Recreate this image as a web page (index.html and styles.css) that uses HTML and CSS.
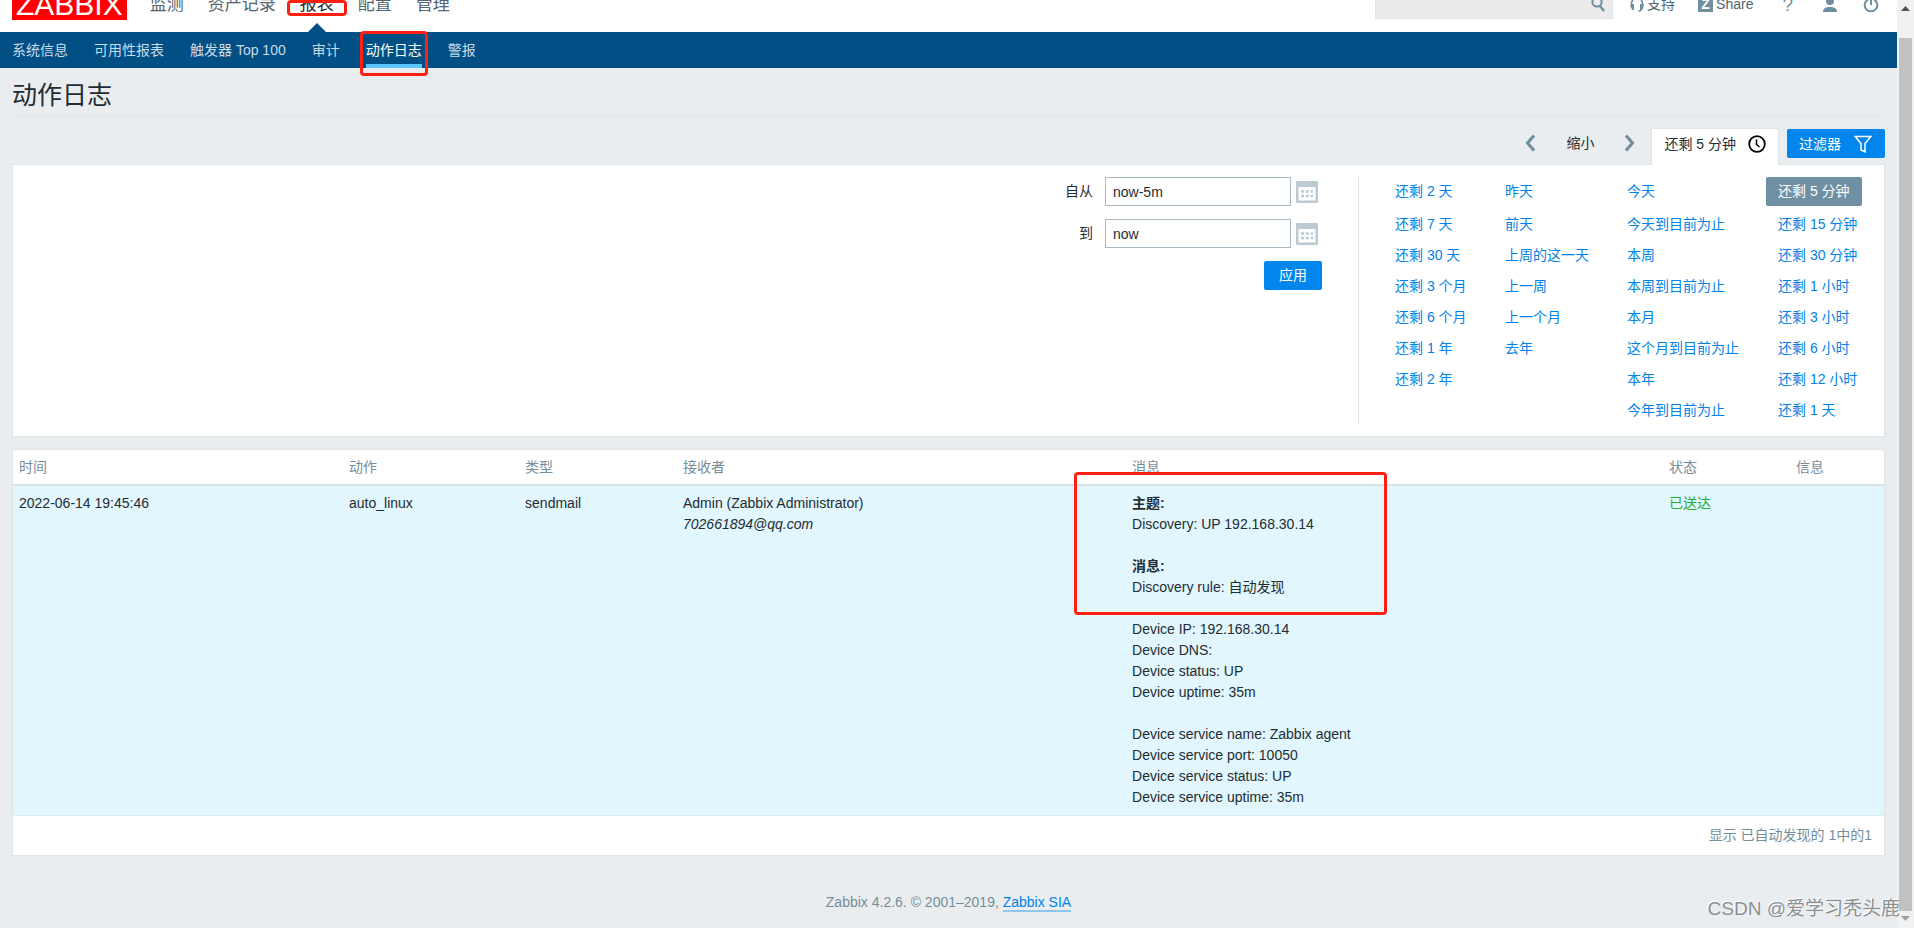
FILE: index.html
```html
<!DOCTYPE html>
<html lang="zh-CN">
<head>
<meta charset="utf-8">
<title>动作日志</title>
<link rel="stylesheet" href="styles.css">
</head>
<body>
<div class="page">
  <header class="top">
    <a class="logo" href="#">ZABBIX</a>
    <nav class="menu">
      <a href="#">监测</a>
      <a href="#">资产记录</a>
      <a href="#" class="current"><span class="mark mark-menu"></span>报表</a>
      <a href="#">配置</a>
      <a href="#">管理</a>
    </nav>
    <div class="tools">
      <div class="search">
        <input type="text" aria-label="搜索">
        <button type="button" aria-label="搜索"><svg width="14" height="16" viewBox="0 0 14 16" fill="none" stroke="#6f8fa1" stroke-width="2"><circle cx="6" cy="6" r="4.6"/><path d="M9 10l4 5" stroke-width="2.4"/></svg></button>
      </div>
      <a class="support" href="#"><svg width="14" height="16" viewBox="0 0 14 16"><path d="M1.5 9V6.500a5.500 5.500 0 0 1 11 0V9c0 3-1 4.500-4 5.500" fill="none" stroke="#6f8fa1" stroke-width="1.600"/><path d="M.5 7H4v6H2.500L.5 10zM13.500 7H10v6h1.500l2-3z" fill="#6f8fa1"/></svg>支持</a>
      <a class="share" href="#"><span class="zicon">Z</span>Share</a>
      <a class="help" href="#">?</a>
      <a class="ico" href="#" aria-label="用户"><svg width="16" height="17" viewBox="0 0 16 17" fill="#6f8fa1"><circle cx="8" cy="5" r="4"/><path d="M1 16c0-4 3-5 7-5s7 1 7 5z"/></svg></a>
      <a class="ico" href="#" aria-label="退出"><svg width="16" height="17" viewBox="0 0 16 17" fill="none" stroke="#6f8fa1" stroke-width="2"><path d="M5 3.500a6.300 6.300 0 1 0 6 0M8 1v8"/></svg></a>
    </div>
  </header>
  <nav class="submenu">
    <a href="#">系统信息</a>
    <a href="#">可用性报表</a>
    <a href="#">触发器 Top 100</a>
    <a href="#">审计</a>
    <a href="#" class="selected">动作日志<span class="mark mark-sub"></span></a>
    <a href="#">警报</a>
  </nav>
  <main>
    <h1>动作日志</h1>
    <div class="tabs">
      <button type="button" class="arrow" aria-label="上一页"><svg width="10" height="18" viewBox="0 0 10 18" fill="none" stroke="#6f8fa1" stroke-width="3"><path d="M9 1.500L2.500 9L9 16.500"/></svg></button>
      <button type="button" class="zoomout">缩小</button>
      <button type="button" class="arrow" aria-label="下一页"><svg width="10" height="18" viewBox="0 0 10 18" fill="none" stroke="#6f8fa1" stroke-width="3"><path d="M1 1.500L7.500 9L1 16.500"/></svg></button>
      <a class="timetab" href="#">还剩 5 分钟<svg width="18" height="18" viewBox="0 0 18 18" fill="none" stroke="#000"><circle cx="9" cy="9" r="7.800" stroke-width="1.800"/><path d="M8.500 4.500V9.500L11.500 12" stroke-width="1.500"/></svg></a>
      <a class="filtertab" href="#">过滤器<svg width="18" height="18" viewBox="0 0 18 18" fill="none" stroke="#fff" stroke-width="1.500"><path d="M1.200 1.500H16.800L11 8.500V16.800L7 15V8.500z"/></svg></a>
    </div>
    <section class="filter">
      <form class="range">
        <label for="from">自从</label>
        <input id="from" type="text" value="now-5m">
        <button type="button" class="cal" aria-label="日历"><svg width="22" height="22" viewBox="0 0 22 22"><path d="M0 1q0-1 1-1h20q1 0 1 1v20q0 1-1 1H1q-1 0-1-1zM2.500 6v13.500h17V6z" fill="#bccad4" fill-rule="evenodd"/><path d="M5 10.500h12M5 15h12" stroke="#bccad4" stroke-width="2.500" stroke-dasharray="3 1.800"/></svg></button>
        <label for="to">到</label>
        <input id="to" type="text" value="now">
        <button type="button" class="cal" aria-label="日历"><svg width="22" height="22" viewBox="0 0 22 22"><path d="M0 1q0-1 1-1h20q1 0 1 1v20q0 1-1 1H1q-1 0-1-1zM2.500 6v13.500h17V6z" fill="#bccad4" fill-rule="evenodd"/><path d="M5 10.500h12M5 15h12" stroke="#bccad4" stroke-width="2.500" stroke-dasharray="3 1.800"/></svg></button>
        <button type="button" class="apply">应用</button>
      </form>
      <div class="quick">
        <ul>
          <li><a href="#">还剩 2 天</a></li><li><a href="#">还剩 7 天</a></li><li><a href="#">还剩 30 天</a></li><li><a href="#">还剩 3 个月</a></li><li><a href="#">还剩 6 个月</a></li><li><a href="#">还剩 1 年</a></li><li><a href="#">还剩 2 年</a></li>
        </ul>
        <ul>
          <li><a href="#">昨天</a></li><li><a href="#">前天</a></li><li><a href="#">上周的这一天</a></li><li><a href="#">上一周</a></li><li><a href="#">上一个月</a></li><li><a href="#">去年</a></li>
        </ul>
        <ul>
          <li><a href="#">今天</a></li><li><a href="#">今天到目前为止</a></li><li><a href="#">本周</a></li><li><a href="#">本周到目前为止</a></li><li><a href="#">本月</a></li><li><a href="#">这个月到目前为止</a></li><li><a href="#">本年</a></li><li><a href="#">今年到目前为止</a></li>
        </ul>
        <ul>
          <li><a href="#" class="picked">还剩 5 分钟</a></li><li><a href="#">还剩 15 分钟</a></li><li><a href="#">还剩 30 分钟</a></li><li><a href="#">还剩 1 小时</a></li><li><a href="#">还剩 3 小时</a></li><li><a href="#">还剩 6 小时</a></li><li><a href="#">还剩 12 小时</a></li><li><a href="#">还剩 1 天</a></li>
        </ul>
      </div>
    </section>
    <table class="log">
      <colgroup><col class="c-time"><col class="c-action"><col class="c-type"><col class="c-to"><col class="c-msg"><col class="c-status"><col></colgroup>
      <thead>
        <tr><th>时间</th><th>动作</th><th>类型</th><th>接收者</th><th>消息</th><th>状态</th><th>信息</th></tr>
      </thead>
      <tbody>
        <tr>
          <td>2022-06-14 19:45:46</td>
          <td>auto_linux</td>
          <td>sendmail</td>
          <td>Admin (Zabbix Administrator)<br><em>702661894@qq.com</em></td>
          <td><div class="message"><span class="mark mark-msg"></span><b>主题:</b><br>Discovery: UP 192.168.30.14<br><br><b>消息:</b><br>Discovery rule: 自动发现<br><br>Device IP: 192.168.30.14<br>Device DNS:<br>Device status: UP<br>Device uptime: 35m<br><br>Device service name: Zabbix agent<br>Device service port: 10050<br>Device service status: UP<br>Device service uptime: 35m</div></td>
          <td class="sent">已送达</td>
          <td></td>
        </tr>
      </tbody>
      <tfoot>
        <tr><td colspan="7">显示 已自动发现的 1中的1</td></tr>
      </tfoot>
    </table>
  </main>
  <footer>Zabbix 4.2.6. © 2001–2019, <a href="#">Zabbix SIA</a></footer>
</div>
<div class="scrollbar">
  <svg width="9" height="5" viewBox="0 0 9 5"><path d="M0 5L4.500 0L9 5z" fill="#505050"/></svg>
  <div class="thumb"></div>
  <svg width="9" height="5" viewBox="0 0 9 5"><path d="M0 0L4.500 5L9 0z" fill="#a0a0a0"/></svg>
</div>
<div class="watermark">CSDN @爱学习秃头鹿</div>
</body>
</html>
```
FILE: styles.css
```css
* {
  box-sizing: border-box;
}

body {
  margin: 0;
  display: flex;
  position: relative;
  min-height: 100vh;
  background: #e9edf0;
  color: #1f2c33;
  font: 14px/21px "Liberation Sans", "Noto Sans CJK SC", sans-serif;
}

a {
  color: #0082e6;
  text-decoration: none;
}

button,
input {
  font: inherit;
  color: inherit;
  border: 0;
  padding: 0;
  background: none;
}

svg {
  display: block;
  flex: none;
}

.page {
  flex: 1;
  min-width: 0;
}

/* red highlight frames */
.mark {
  position: absolute;
  border: 3px solid #ff2012;
  border-radius: 4px;
}

/* header */
.top {
  display: flex;
  align-items: flex-end;
  height: 32px;
  padding: 0 12px;
  background: #fff;
  overflow: hidden;
}

.logo {
  margin: 0 23px 12px 0;
  padding: 0 4px;
  background: #f00;
  color: #fff;
  font-size: 30px;
  line-height: 30px;
}

.menu {
  display: flex;
  gap: 24px;
  height: 40px;
  font-size: 17px;
  line-height: 26px;
}

.menu a {
  position: relative;
  color: #52646f;
}

.menu .current {
  color: #1f2c33;
}

.menu .current::after {
  content: "";
  position: absolute;
  bottom: 0;
  left: 50%;
  margin-left: -9px;
  border: 9px solid transparent;
  border-top: 0;
  border-bottom-color: #024f85;
}

.mark-menu {
  inset: 8px -13px 16px;
}

.tools {
  display: flex;
  align-items: flex-end;
  margin: 0 6px 13px auto;
  color: #52646f;
}

.tools a {
  display: flex;
  align-items: center;
  gap: 3px;
  height: 17px;
  margin-bottom: 6px;
  color: #52646f;
}

.search {
  display: flex;
  align-items: center;
  margin-right: 17px;
  width: 238px;
  height: 31px;
  border: 1px solid #dfe4e7;
  background: #ebebeb;
}

.search input {
  flex: 1;
  min-width: 0;
}

.search button {
  padding: 0 7px 0 0;
}

.tools .support {
  margin-right: 23px;
}

.tools .share {
  margin-right: 29px;
}

.zicon {
  width: 15px;
  background: #6f8fa1;
  color: #fff;
  font-weight: bold;
  font-size: 14px;
  line-height: 15px;
  text-align: center;
}

.tools .help {
  margin-right: 29px;
  color: #6f8fa1;
  font-size: 19px;
}

.ico + .ico {
  margin-left: 25px;
}

/* second level menu */
.submenu {
  display: flex;
  gap: 26px;
  height: 36px;
  padding: 0 12px;
  background: #024f85;
  line-height: 36px;
}

.submenu a {
  position: relative;
  color: #c8dbe8;
}

.submenu .selected {
  color: #fff;
  box-shadow: inset 0 -4px #5cc6ff;
}

.mark-sub {
  inset: -1px -6px -8px;
}

main {
  padding: 0 12px;
}

h1 {
  margin: 0 0 11px;
  padding: 11px 0 4px;
  border-bottom: 1px solid #dfe4e7;
  font-size: 25px;
  font-weight: normal;
  line-height: 33px;
}

/* time selector */
.tabs {
  display: flex;
  justify-content: flex-end;
  align-items: flex-start;
  line-height: 30px;
}

.arrow {
  padding: 6px 0;
}

.zoomout {
  margin: 0 31px;
}

.timetab {
  display: flex;
  align-items: center;
  gap: 12px;
  position: relative;
  height: 37px;
  margin: 0 8px -1px 16px;
  padding: 0 12px 6px;
  border: 1px solid #dfe4e7;
  border-bottom: 0;
  border-radius: 2px 2px 0 0;
  background: #fff;
  color: #1f2c33;
}

.filtertab {
  display: flex;
  align-items: center;
  gap: 13px;
  height: 29px;
  margin-top: 1px;
  padding: 0 13px 0 12px;
  border-radius: 2px;
  background: #0086ec;
  color: #fff;
}

.filter {
  display: flex;
  justify-content: flex-end;
  margin-bottom: 12px;
  padding: 12px 20px 11px;
  border: 1px solid #dfe4e7;
  background: #fff;
}

.range {
  display: grid;
  grid-template-columns: auto 186px 27px;
  grid-auto-rows: 29px;
  gap: 13px 0;
  align-content: start;
  align-items: center;
  padding-right: 40px;
}

.range label {
  margin-right: 12px;
  text-align: right;
}

.range input {
  height: 29px;
  padding: 0 7px;
  border: 1px solid #a9bac4;
  background: #fff;
}

.range .cal {
  margin: 1px 0 0 5px;
}

.range .apply {
  grid-column: 1 / -1;
  justify-self: end;
  width: 58px;
  height: 29px;
  margin-right: -4px;
  border-radius: 2px;
  background: #0086ec;
  color: #fff;
}

.quick {
  display: grid;
  grid-template-columns: 110px 122px 139px 98px;
  padding-left: 36px;
  border-left: 1px solid #dfe4e7;
}

.quick ul {
  margin: 0;
  padding: 0;
  list-style: none;
}

.quick li {
  height: 31px;
  line-height: 29px;
  white-space: nowrap;
}

.quick li + li {
  line-height: 32px;
}

.quick ul:last-child a {
  display: inline-block;
  padding: 0 12px;
}

.quick .picked {
  border-radius: 2px;
  background: #6f8fa3;
  color: #fff;
}

/* log table */
.log {
  width: 100%;
  table-layout: fixed;
  border-collapse: separate;
  border-spacing: 0;
  border: 1px solid #dfe4e7;
  background: #fff;
}

.c-time { width: 17.64%; }
.c-action { width: 9.41%; }
.c-type { width: 8.44%; }
.c-to { width: 24%; }
.c-msg { width: 28.7%; }
.c-status { width: 6.79%; }

.log th,
.log td {
  padding: 7px 6px;
  text-align: left;
  vertical-align: top;
}

.log th {
  padding-bottom: 6px;
  border-bottom: 2px solid #d8e3e8;
  color: #768d99;
  font-weight: normal;
}

.log tbody td {
  background: #e1f6fd;
}

.message {
  position: relative;
}

.mark-msg {
  top: -21px;
  left: -58px;
  width: 313px;
  height: 143px;
}

.log .sent {
  color: #2aab38;
}

.log tfoot td {
  padding: 9px 12px;
  border-top: 1px solid #dfe9ee;
  color: #768d99;
  text-align: right;
}

footer {
  padding: 36px 0 12px;
  color: #768d99;
  text-align: center;
}

footer a {
  border-bottom: 2px solid #8ec6f0;
}

/* scroll bar */
.scrollbar {
  display: flex;
  flex-direction: column;
  align-items: center;
  width: 17px;
  padding: 6px 0 7px;
  background: #f1f1f1;
}

.thumb {
  flex: 1;
  width: 13px;
  margin: 27px 0 5px;
  background: #c1c1c1;
}

.watermark {
  position: absolute;
  right: 14px;
  bottom: 5px;
  color: #8b8f92;
  font-size: 19px;
  line-height: 28px;
  text-shadow: -1px -1px #fff;
}
```
